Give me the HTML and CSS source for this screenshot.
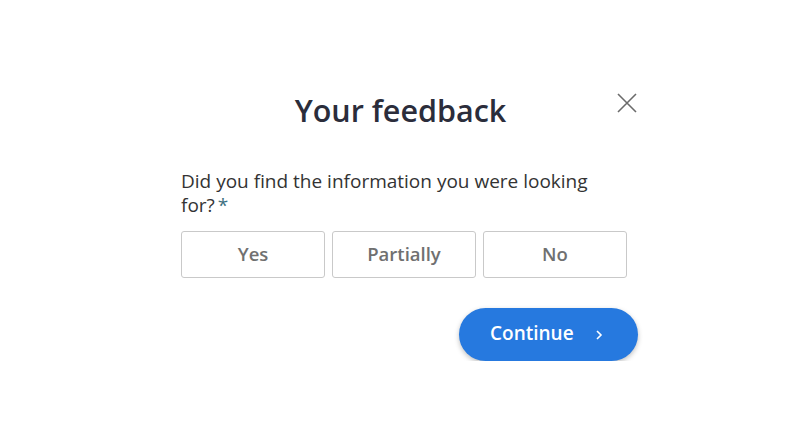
FILE: index.html
```html
<!DOCTYPE html>
<html>
<head>
<meta charset="utf-8">
<link rel="stylesheet" href="styles.css">
</head>
<body>
<div class="dialog">
  <div class="header">
    <h1 class="title">Your feedback</h1>
    <button class="close" aria-label="Close">
      <svg width="20" height="20" viewBox="0 0 20 20"><path d="M1 1 L19 19 M19 1 L1 19" stroke="#6b6b6b" stroke-width="1.6" fill="none"/></svg>
    </button>
  </div>
  <p class="question">Did you find the information you were looking for? <span class="req">*</span></p>
  <div class="options">
    <button class="opt">Yes</button>
    <button class="opt">Partially</button>
    <button class="opt">No</button>
  </div>
  <div class="actions">
    <button class="continue"><span class="label">Continue</span><span class="chev"><svg width="8" height="12" viewBox="0 0 8 12"><path d="M2 2 L6 6 L2 10" stroke="#fff" stroke-width="1.6" fill="none"/></svg></span></button>
  </div>
</div>
</body>
</html>
```
FILE: styles.css
```css
html, body {
  margin: 0;
  padding: 0;
  background: #fff;
  font-family: "Open Sans", "Noto Sans", sans-serif;
}
.dialog {
  width: 446px;
  margin-left: 181px;
  padding-top: 88px;
}
.header {
  position: relative;
  display: flex;
  justify-content: center;
}
.title {
  margin: 0 0 0 -7px;
  font-size: 30.5px;
  font-weight: 600;
  color: #2b2d3b;
  line-height: 44px;
}
.close {
  position: absolute;
  right: -10px;
  top: 5px;
  width: 20px;
  height: 20px;
  padding: 0;
  border: 0;
  background: none;
}
.close svg { display: block; }
.question {
  margin: 37px 0 0;
  max-width: 420px;
  font-size: 19px;
  line-height: 24px;
  color: #333;
}
.req {
  color: #3c7080;
  margin-left: -2px;
}
.options {
  display: grid;
  grid-template-columns: repeat(3, 1fr);
  gap: 7px;
  margin-top: 14px;
}
.opt {
  height: 47px;
  border: 1px solid #c9c9c9;
  border-radius: 3px;
  background: #fff;
  font-family: inherit;
  font-size: 18.5px;
  font-weight: 600;
  color: #707070;
  padding: 0 0 2px;
}
.actions {
  display: flex;
  justify-content: flex-end;
  margin-top: 30px;
  margin-right: -11px;
}
.continue {
  width: 179px;
  height: 53px;
  border: 0;
  border-radius: 27px;
  background: #2679df;
  color: #fff;
  font-family: inherit;
  font-size: 19px;
  font-weight: 600;
  display: flex;
  align-items: center;
  padding: 0 0 4px 31px;
  box-shadow: 0 2px 5px rgba(0,0,0,0.25);
}
.chev {
  margin-left: 21px;
  display: flex;
  margin-top: 5px;
}
```
